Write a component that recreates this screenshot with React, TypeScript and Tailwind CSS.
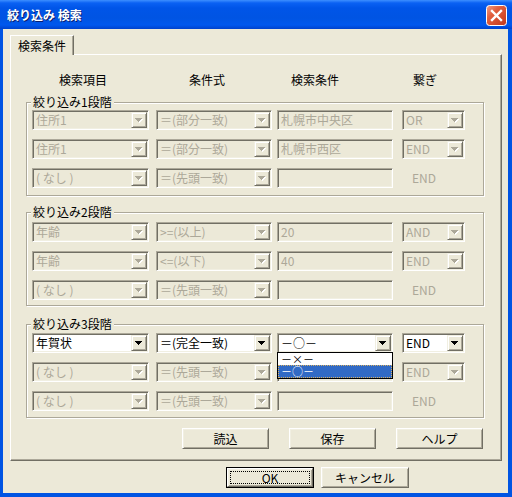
import React from "react";

const SUNKEN =
  "border border-t-[#aca899] border-l-[#aca899] border-r-white border-b-white shadow-[inset_1px_1px_0_#716f64,inset_-1px_-1px_0_#f1efe2]";
const RAISED =
  "border border-t-[#f1efe2] border-l-[#f1efe2] border-r-[#716f64] border-b-[#716f64] shadow-[inset_1px_1px_0_#ffffff,inset_-1px_-1px_0_#aca899]";
const BTN =
  "border border-t-white border-l-white border-r-[#716f64] border-b-[#716f64] shadow-[inset_1px_1px_0_#f1efe2,inset_-1px_-1px_0_#aca899]";

function Arrow({ on }: { on: boolean }) {
  const rows = [
    [0, 0, 7],
    [1, 1, 5],
    [2, 2, 3],
    [3, 3, 1],
  ];
  return (
    <svg width="8" height="5" viewBox="0 0 8 5" shapeRendering="crispEdges">
      {!on &&
        rows.map(([y, x, w]) => (
          <rect key={"s" + y} x={x + 1} y={y + 1} width={w} height={1} fill="#ffffff" />
        ))}
      {rows.map(([y, x, w]) => (
        <rect key={y} x={x} y={y} width={w} height={1} fill={on ? "#000000" : "#aca899"} />
      ))}
    </svg>
  );
}

function Combo({ w, text, on }: { w: string; text: string; on?: boolean }) {
  return (
    <div
      className={`flex h-[20px] shrink-0 p-[1px] ${w} ${SUNKEN} ${
        on ? "bg-white text-black" : "bg-[#ece9d8] text-[#aca899]"
      }`}
    >
      <span className="flex-1 overflow-hidden whitespace-nowrap pl-[2px] leading-[16px]">{text}</span>
      <span className={`flex h-[16px] w-[16px] items-center justify-center bg-[#ece9d8] pt-[1px] ${RAISED}`}>
        <Arrow on={!!on} />
      </span>
    </div>
  );
}

function Field({ text }: { text: string }) {
  return (
    <div
      className={`h-[20px] w-[116px] shrink-0 overflow-hidden whitespace-nowrap bg-[#ece9d8] p-[1px] pl-[3px] leading-[16px] text-[#aca899] ${SUNKEN}`}
    >
      {text}
    </div>
  );
}

type Row = { a: string; b: string; c: string; d: string; last?: boolean; on?: boolean; list?: boolean };

function GroupRow({ r }: { r: Row }) {
  return (
    <div className="flex">
      <Combo w="w-[117px]" text={r.a} on={r.on} />
      <div className="ml-[7px]">
        <Combo w="w-[116px]" text={r.b} on={r.on} />
      </div>
      <div className="relative ml-[5px]">
        {r.on ? <Combo w="w-[116px]" text={r.c} on /> : <Field text={r.c} />}
        {r.list && (
          <div className="absolute left-0 top-[19px] z-20 flex w-[116px] flex-col border border-black bg-white">
            <div className="h-[12px] pl-[3px] text-[11px] leading-[12px] text-black">－×－</div>
            <div className="h-[13px] border border-dotted border-[#d8b060] bg-[#316ac5] pl-[2px] text-[11px] leading-[11px] text-white">
              －○－
            </div>
          </div>
        )}
      </div>
      <div className="ml-[9px]">
        {r.last ? (
          <div className="w-[63px] pl-[10px] leading-[20px] text-[#aca899]">{r.d}</div>
        ) : (
          <Combo w="w-[63px]" text={r.d} on={r.on} />
        )}
      </div>
    </div>
  );
}

function Group({ label, rows, cls }: { label: string; rows: Row[]; cls: string }) {
  return (
    <div
      className={`relative ml-[15px] flex h-[94px] w-[458px] flex-col gap-[9px] border border-[#aca899] pl-[5px] shadow-[inset_1px_1px_0_#ffffff,1px_1px_0_#ffffff] ${cls}`}
    >
      <span className="absolute left-[4px] top-[-8px] bg-[#ece9d8] px-[2px] leading-[14px] text-black">{label}</span>
      {rows.map((r, i) => (
        <GroupRow key={i} r={r} />
      ))}
    </div>
  );
}

const NONE = "( なし )";
const HEAD = "＝(先頭一致)";

const groups: { label: string; cls: string; rows: Row[] }[] = [
  {
    label: "絞り込み1段階",
    cls: "mt-[15px] pt-[7px]",
    rows: [
      { a: "住所1", b: "＝(部分一致)", c: "札幌市中央区", d: "OR" },
      { a: "住所1", b: "＝(部分一致)", c: "札幌市西区", d: "END" },
      { a: NONE, b: HEAD, c: "", d: "END", last: true },
    ],
  },
  {
    label: "絞り込み2段階",
    cls: "mt-[16px] pt-[9px]",
    rows: [
      { a: "年齢", b: ">=(以上)", c: "20", d: "AND" },
      { a: "年齢", b: "<=(以下)", c: "40", d: "END" },
      { a: NONE, b: HEAD, c: "", d: "END", last: true },
    ],
  },
  {
    label: "絞り込み3段階",
    cls: "mt-[18px] pt-[8px]",
    rows: [
      { a: "年賀状", b: "＝(完全一致)", c: "－○－", d: "END", on: true, list: true },
      { a: NONE, b: HEAD, c: "", d: "END" },
      { a: NONE, b: HEAD, c: "", d: "END", last: true },
    ],
  },
];

function PushButton({ label, cls }: { label: string; cls: string }) {
  return (
    <div className={`flex h-[21px] w-[87px] items-center justify-center bg-[#ece9d8] text-black ${BTN} ${cls}`}>
      {label}
    </div>
  );
}

export default function App() {
  return (
    <div className="flex h-[497px] w-[512px] flex-col overflow-hidden bg-[#0054e3] font-['Noto_Sans_CJK_JP',sans-serif] text-[12px] leading-[14px] select-none">
      {/* title bar */}
      <div className="flex h-[29px] shrink-0 items-center bg-[linear-gradient(#3d8fff_0px,#0a61f3_3px,#0055e8_8px,#0054e3_18px,#0058ee_25px,#0042cc_29px)] pl-[7px] pr-[5px]">
        <span className="flex-1 pt-[1px] text-[12px] font-bold text-white [text-shadow:1px_1px_0_#0a1e70]">
          絞り込み 検索
        </span>
        <svg width="21" height="21" viewBox="0 0 21 21" className="mt-[1px]">
          <defs>
            <linearGradient id="cl" x1="0" y1="0" x2="1" y2="1">
              <stop offset="0" stopColor="#f0a088" />
              <stop offset="0.35" stopColor="#e2603f" />
              <stop offset="1" stopColor="#c2371a" />
            </linearGradient>
          </defs>
          <rect x="0.5" y="0.5" width="20" height="20" rx="3" fill="url(#cl)" stroke="#ffffff" />
          <path d="M6 6 L15 15 M15 6 L6 15" stroke="#ffffff" strokeWidth="2.4" strokeLinecap="square" />
        </svg>
      </div>

      {/* client area */}
      <div className="mb-[4px] ml-[3px] mr-[4px] flex flex-1 flex-col bg-[#ece9d8]">
        <div className="relative z-10 -mb-[1px] ml-[7px] mt-[6px] flex h-[20px] w-[64px] items-center justify-center border border-b-0 border-t-white border-l-white border-r-[#716f64] bg-[#ece9d8] pt-[1px] text-black shadow-[inset_-1px_0_0_#aca899]">
          検索条件
        </div>

        <div className="ml-[7px] flex h-[407px] w-[492px] flex-col border border-t-white border-l-white border-r-[#716f64] border-b-[#716f64] shadow-[inset_-1px_-1px_0_#aca899]">
          <div className="mt-[18px] flex text-black">
            <span className="ml-[32px] w-[80px] text-center">検索項目</span>
            <span className="ml-[44px] w-[80px] text-center">条件式</span>
            <span className="ml-[28px] w-[80px] text-center">検索条件</span>
            <span className="ml-[30px] w-[80px] text-center">繋ぎ</span>
          </div>

          {groups.map((g) => (
            <Group key={g.label} label={g.label} rows={g.rows} cls={g.cls} />
          ))}

          <div className="ml-[171px] mt-[10px] flex gap-[20px]">
            <PushButton label="読込" cls="" />
            <PushButton label="保存" cls="" />
            <PushButton label="ヘルプ" cls="" />
          </div>
        </div>

        <div className="ml-[223px] mt-[6px] flex gap-[7px]">
          <div className="h-[21px] w-[88px] border border-black">
            <div className={`flex h-full w-full items-center justify-center bg-[#ece9d8] p-[2px] ${BTN}`}>
              <div className="flex h-full w-full items-center justify-center border border-dotted border-black text-black">
                OK
              </div>
            </div>
          </div>
          <PushButton label="キャンセル" cls="w-[88px]" />
        </div>
      </div>
    </div>
  );
}
